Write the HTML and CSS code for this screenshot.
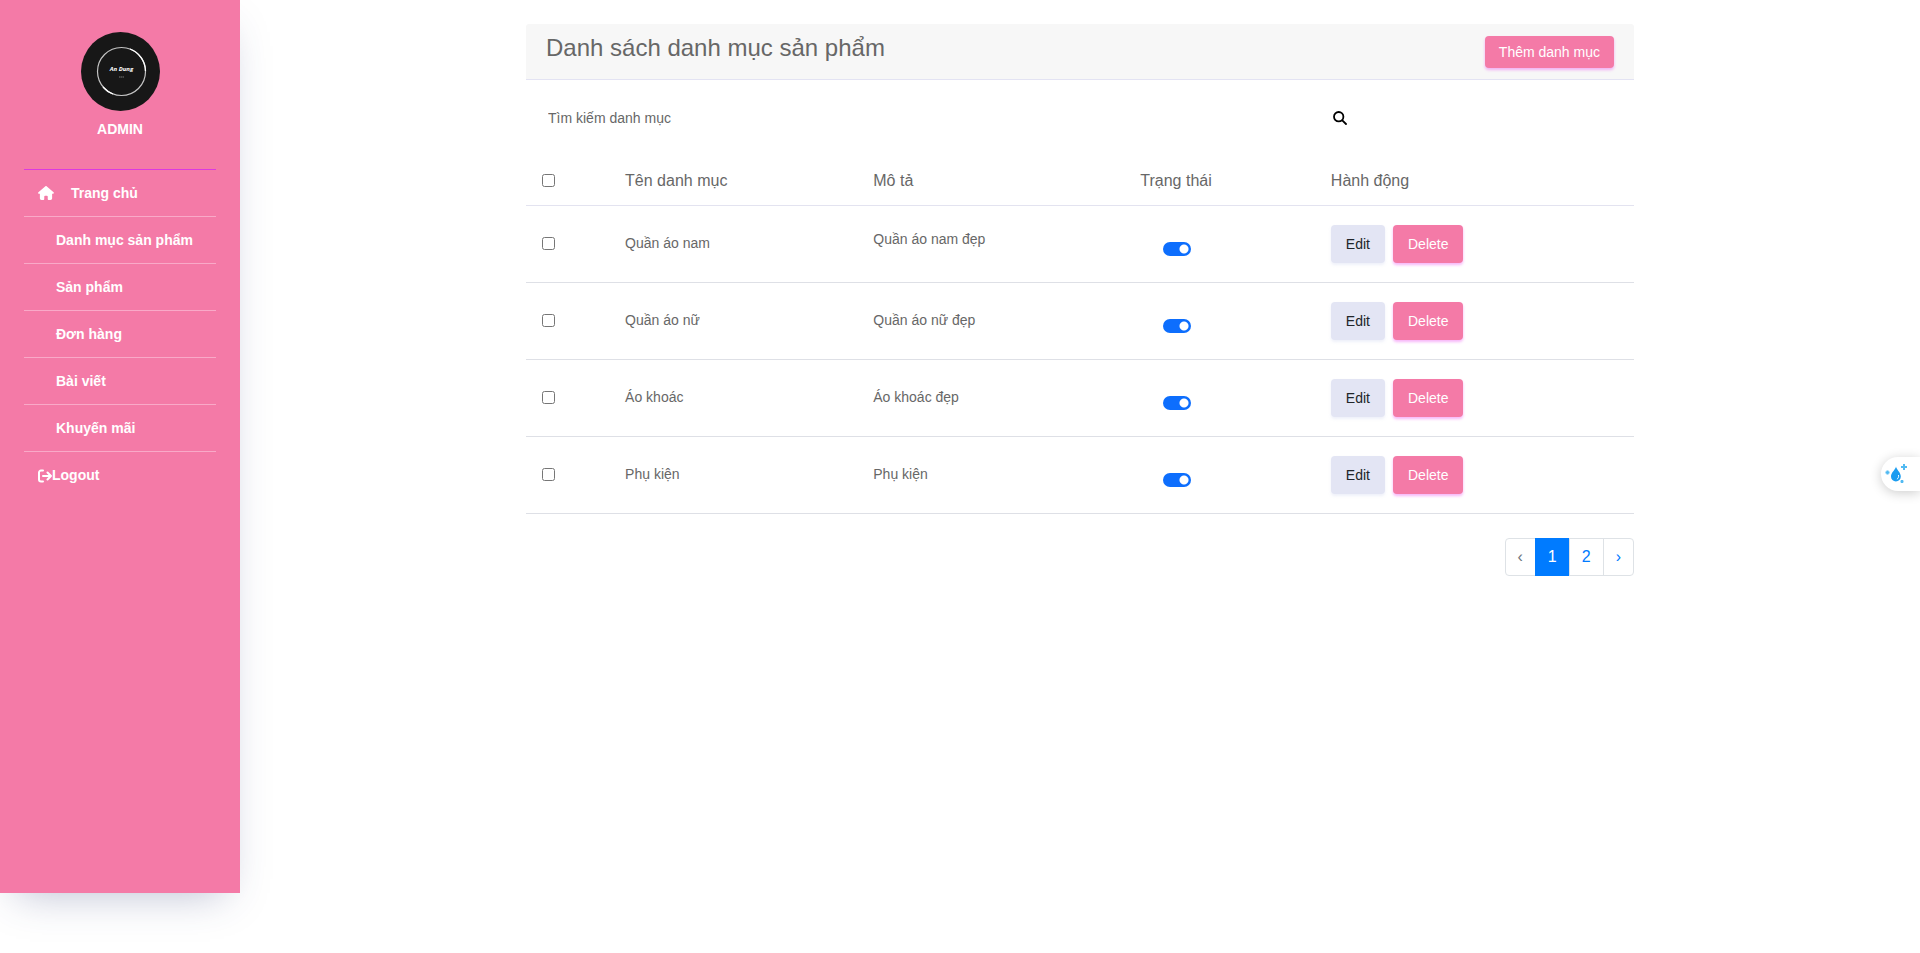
FILE: index.html
```html
<!DOCTYPE html>
<html lang="vi">
<head>
<meta charset="utf-8">
<title>Danh mục sản phẩm</title>
<link rel="stylesheet" href="styles.css">
</head>
<body>
<div class="layout">
  <aside class="sidebar">
    <div class="profile">
      <svg class="avatar" viewBox="0 0 79 79" role="img" aria-label="An Dung">
        <circle cx="39.5" cy="39.5" r="39.5" fill="#171717"/>
        <circle cx="40.5" cy="39.5" r="24" fill="none" stroke="#c4c4c4" stroke-width="1.200"/>
        <path d="M49 17a24 24 0 0 1 15.500 22M22 55a24 24 0 0 0 10 7" fill="none" stroke="#fff" stroke-width="1.300"/>
        <text class="avatar-name" x="40.500" y="39" text-anchor="middle">An Dung</text>
        <path d="M38 45h5" stroke="#777" stroke-width="1" stroke-dasharray="1.500 .4"/>
      </svg>
      <span>ADMIN</span>
    </div>
    <nav class="menu">
      <a class="home" href="#"><svg class="home-icon" viewBox="0 0 576 512" fill="currentColor" aria-hidden="true"><path d="M575.800 255.500c0 18-15 32.100-32 32.100h-32l.7 160.200c.2 35.500-28.500 64.300-64 64.300H392c-22 0-40-18-40-40v-88c0-17.700-14.300-32-32-32h-64c-17.700 0-32 14.300-32 32v88c0 22-18 40-40 40h-56c-35 0-64-29-64-64V287.600H32c-18 0-32-14-32-32.100 0-9 3-17 10-24L266.400 8c7-7 15-8 22-8s15 2 21 7l255.400 224.500c8 7 12 15 11 24z"/></svg>Trang chủ</a>
      <a class="sub" href="#">Danh mục sản phẩm</a>
      <a class="sub" href="#">Sản phẩm</a>
      <a class="sub" href="#">Đơn hàng</a>
      <a class="sub" href="#">Bài viết</a>
      <a class="sub" href="#">Khuyến mãi</a>
      <a href="#"><svg class="logout-icon" viewBox="0 0 14 14" fill="none" stroke="currentColor" stroke-width="2" stroke-linecap="round" stroke-linejoin="round" aria-hidden="true"><path d="M5 1.500H3a2 2 0 0 0-2 2v7a2 2 0 0 0 2 2h2M5 7h8M9.500 3.500 13 7l-3.500 3.500"/></svg>Logout</a>
    </nav>
  </aside>

  <main class="content">
    <div class="container">
      <header class="card-header">
        <h1>Danh sách danh mục sản phẩm</h1>
        <button class="btn btn-primary btn-small" type="button">Thêm danh mục</button>
      </header>
      <form class="search">
        <input type="text" placeholder="Tìm kiếm danh mục" aria-label="Tìm kiếm danh mục">
        <button type="button" aria-label="Tìm kiếm"><svg viewBox="0 0 14 14" fill="none" stroke="currentColor" stroke-width="1.800" stroke-linecap="round" aria-hidden="true"><circle cx="5.700" cy="5.700" r="4.700"/><path d="m9.300 9.300 3.700 3.700"/></svg></button>
      </form>
      <table class="table">
        <colgroup><col class="c-check"><col class="c-name"><col class="c-desc"><col class="c-status"><col class="c-action"></colgroup>
        <thead>
          <tr><th><input type="checkbox" aria-label="Chọn tất cả"></th><th>Tên danh mục</th><th>Mô tả</th><th>Trạng thái</th><th>Hành động</th></tr>
        </thead>
        <tbody>
          <tr><td><input type="checkbox" aria-label="Chọn Quần áo nam"></td><td>Quần áo nam</td><td><p>Quần áo nam đẹp</p></td><td><input class="switch" type="checkbox" checked aria-label="Trạng thái Quần áo nam"></td><td><div class="actions"><button class="btn btn-light" type="button">Edit</button><button class="btn btn-primary" type="button">Delete</button></div></td></tr>
          <tr><td><input type="checkbox" aria-label="Chọn Quần áo nữ"></td><td>Quần áo nữ</td><td>Quần áo nữ đẹp</td><td><input class="switch" type="checkbox" checked aria-label="Trạng thái Quần áo nữ"></td><td><div class="actions"><button class="btn btn-light" type="button">Edit</button><button class="btn btn-primary" type="button">Delete</button></div></td></tr>
          <tr><td><input type="checkbox" aria-label="Chọn Áo khoác"></td><td>Áo khoác</td><td>Áo khoác đẹp</td><td><input class="switch" type="checkbox" checked aria-label="Trạng thái Áo khoác"></td><td><div class="actions"><button class="btn btn-light" type="button">Edit</button><button class="btn btn-primary" type="button">Delete</button></div></td></tr>
          <tr><td><input type="checkbox" aria-label="Chọn Phụ kiện"></td><td>Phụ kiện</td><td>Phụ kiện</td><td><input class="switch" type="checkbox" checked aria-label="Trạng thái Phụ kiện"></td><td><div class="actions"><button class="btn btn-light" type="button">Edit</button><button class="btn btn-primary" type="button">Delete</button></div></td></tr>
        </tbody>
      </table>
      <nav class="pagination" aria-label="Phân trang">
        <span class="page disabled">‹</span>
        <span class="page active" aria-current="page">1</span>
        <a class="page" href="#">2</a>
        <a class="page" href="#">›</a>
      </nav>
    </div>
  </main>
</div>
<button class="floating" type="button" aria-label="Trợ lý">
  <svg viewBox="0 0 24 20" aria-hidden="true"><path fill="#1a9cf0" d="M11 2.500c-.5 3-5 6-5 10a4.900 4.900 0 0 0 9.800 0c0-4-4.300-7-4.800-10z"/><path d="M13.500 11c.4 2-.3 3.500-1.600 4.200" stroke="#fff" stroke-width="1" fill="none"/><path stroke="#52baf2" stroke-width="2" d="M19 0v6M16 3h6M2.500 6.500v4M.5 8.500h4M17 16v3M15.500 17.500h3"/></svg>
</button>
</body>
</html>
```
FILE: styles.css
```css
* { box-sizing: border-box; }

body {
  margin: 0;
  background: #fff;
  color: #676767;
  font: 14px/21px "Liberation Sans", Arial, sans-serif;
}

.layout { display: flex; min-height: 100vh; }

.sidebar {
  flex: 0 0 240px;
  height: calc(100vh - 60px);
  padding: 32px 24px;
  background: #f47aa7;
  box-shadow: 0 16px 40px -16px rgba(52, 64, 120, 0.35);
  color: #fff;
  font-weight: 700;
}

.profile {
  display: flex;
  flex-direction: column;
  align-items: center;
  gap: 8px;
  padding-bottom: 29px;
  border-bottom: 1px solid #dc3ae0;
}

.avatar { display: block; width: 79px; height: 79px; }
.avatar-name { font: italic 700 6px "Open Sans", sans-serif; fill: #fff; }

.menu a {
  display: flex;
  align-items: center;
  height: 47px;
  padding: 0 14px;
  border-bottom: 1px solid #f9a9c8;
  color: inherit;
  text-decoration: none;
}
.menu a:last-child { border-bottom: 0; }
.menu .home { gap: 17px; }
.menu .sub { padding-left: 32px; }
.home-icon { width: 16px; height: 14px; }
.logout-icon { width: 14px; height: 14px; }

.content { flex: 1; min-width: 0; padding: 24px 16px; }
.container { max-width: 1108px; margin: 0 auto; }

.card-header {
  display: flex;
  justify-content: space-between;
  align-items: flex-start;
  padding: 12px 20px 11px;
  border-bottom: 1px solid #e3e3f3;
  border-radius: 3px 3px 0 0;
  background: #f7f7f7;
}
h1 { margin: 0; font-size: 24px; line-height: 24px; font-weight: 400; }

.btn {
  padding: 8px 15px;
  border: 0;
  border-radius: 4px;
  font: inherit;
  line-height: 22px;
}
.btn-primary { background: #f47aa7; color: #fff; box-shadow: 0 2px 3px rgba(235, 70, 240, 0.4); }
.btn-light { background: #e3e5f4; color: #212529; box-shadow: 0 2px 3px rgba(200, 204, 235, 0.3); }
.btn-small { padding: 5px 14px; }

.search {
  display: grid;
  grid-template-columns: 805fr 303fr;
  align-items: center;
  padding: 19px 0;
}
.search input {
  height: 38px;
  padding: 0 22px;
  border: 0;
  background: none;
  color: inherit;
  font: inherit;
}
.search input::placeholder { color: #676767; opacity: 1; }
.search button { justify-self: start; display: flex; padding: 2px; border: 0; background: none; color: #000; }
.search svg { width: 14px; height: 14px; }

.table { width: 100%; border-collapse: collapse; table-layout: fixed; }
.c-check { width: 7.5%; }
.c-name { width: 22.4%; }
.c-desc { width: 24.1%; }
.c-status { width: 17.2%; }
.table th, .table td { padding: 0 16px; border-bottom: 1px solid #dee0e6; text-align: left; vertical-align: middle; }
.table th { height: 49px; border-color: #e3e3f0; font-size: 16px; font-weight: 400; }
.table td { height: 77px; }
.table p { margin: 0 0 8px; }
.table input { display: block; width: 13px; height: 13px; margin: 0; }

.table .switch {
  appearance: none;
  width: 28px;
  height: 14px;
  margin: 10px 0 0 23px;
  border-radius: 7px;
  background: radial-gradient(circle at 21px 7px, #fff 4px, #0d6efd 5px);
}

.actions { display: flex; gap: 8px; }

.pagination { display: flex; justify-content: flex-end; margin-top: 24px; }
.page {
  margin-left: -1px;
  padding: 8px 12px;
  border: 1px solid #dee2e6;
  color: #007bff;
  font-size: 16px;
  line-height: 20px;
  text-decoration: none;
}
.page:first-child { border-radius: 4px 0 0 4px; }
.page:last-child { border-radius: 0 4px 4px 0; }
.page.disabled { color: #6c757d; }
.page.active { border-color: #007bff; background: #007bff; color: #fff; }

.floating {
  position: fixed;
  right: 0;
  top: calc(50% - 20px);
  display: flex;
  align-items: center;
  width: 39px;
  height: 34px;
  padding: 0 4px;
  border: 0;
  border-radius: 17px 0 0 17px;
  background: #fff;
  box-shadow: 0 2px 12px rgba(0, 0, 0, 0.2);
}
.floating svg { width: 24px; height: 20px; }
```
